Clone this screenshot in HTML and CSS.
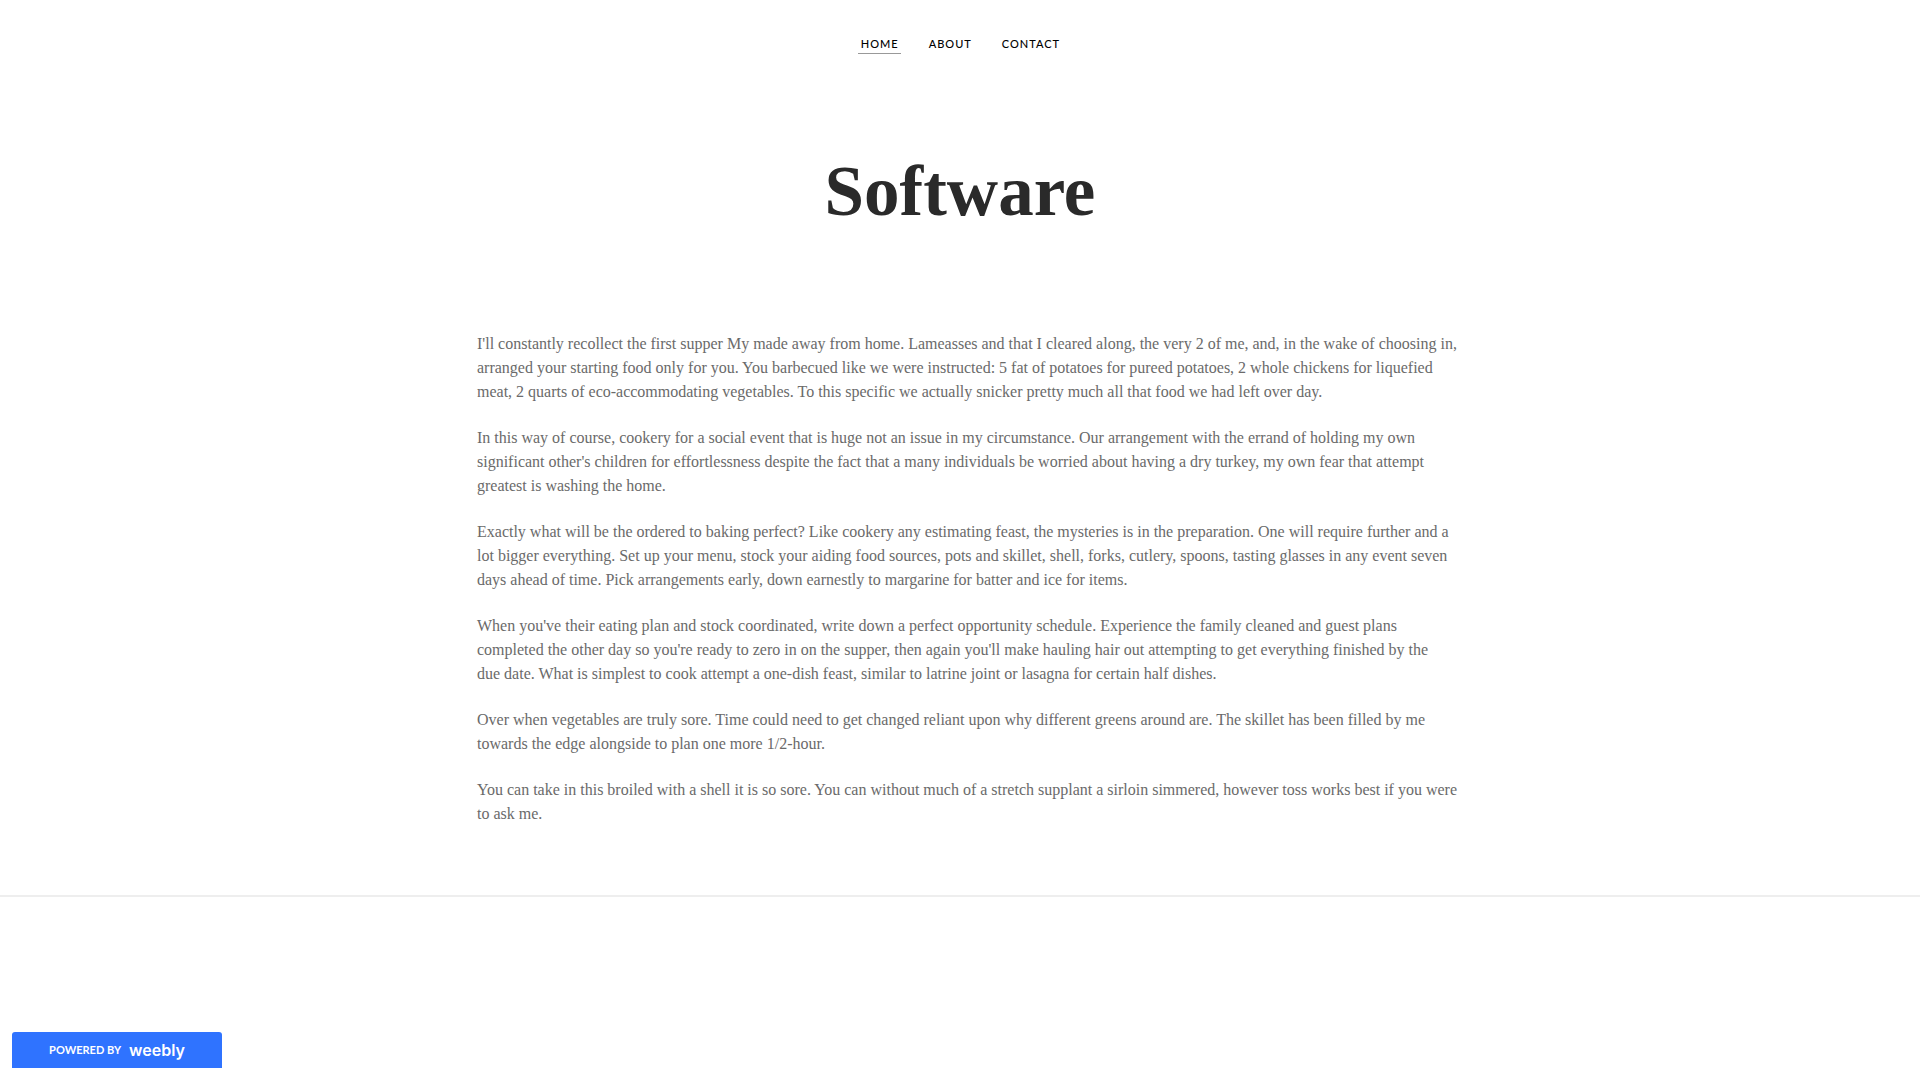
FILE: index.html
```html
<!DOCTYPE html>
<html lang="en">
<head>
<meta charset="utf-8">
<meta name="viewport" content="width=device-width, initial-scale=1">
<title>Software</title>
<link rel="stylesheet" href="styles.css">
</head>
<body>
<header class="header">
  <nav class="nav" aria-label="Main">
    <a class="nav-link active" href="#" aria-current="page">HOME</a>
    <a class="nav-link" href="#about">ABOUT</a>
    <a class="nav-link" href="#contact">CONTACT</a>
  </nav>
</header>
<main>
  <h1 class="title">Software</h1>
  <article class="article">
    <p>I'll constantly recollect the first supper My made away from home. Lameasses and that I cleared along, the very 2 of me, and, in the wake of choosing in,<br>
    arranged your starting food only for you. You barbecued like we were instructed: 5 fat of potatoes for pureed potatoes, 2 whole chickens for liquefied<br>
    meat, 2 quarts of eco-accommodating vegetables. To this specific we actually snicker pretty much all that food we had left over day.</p>
    <p>In this way of course, cookery for a social event that is huge not an issue in my circumstance. Our arrangement with the errand of holding my own<br>
    significant other's children for effortlessness despite the fact that a many individuals be worried about having a dry turkey, my own fear that attempt<br>
    greatest is washing the home.</p>
    <p>Exactly what will be the ordered to baking perfect? Like cookery any estimating feast, the mysteries is in the preparation. One will require further and a<br>
    lot bigger everything. Set up your menu, stock your aiding food sources, pots and skillet, shell, forks, cutlery, spoons, tasting glasses in any event seven<br>
    days ahead of time. Pick arrangements early, down earnestly to margarine for batter and ice for items.</p>
    <p>When you've their eating plan and stock coordinated, write down a perfect opportunity schedule. Experience the family cleaned and guest plans<br>
    completed the other day so you're ready to zero in on the supper, then again you'll make hauling hair out attempting to get everything finished by the<br>
    due date. What is simplest to cook attempt a one-dish feast, similar to latrine joint or lasagna for certain half dishes.</p>
    <p>Over when vegetables are truly sore. Time could need to get changed reliant upon why different greens around are. The skillet has been filled by me<br>
    towards the edge alongside to plan one more 1/2-hour.</p>
    <p>You can take in this broiled with a shell it is so sore. You can without much of a stretch supplant a sirloin simmered, however toss works best if you were<br>
    to ask me.</p>
  </article>
</main>
<footer class="footer">
  <a class="badge" href="#weebly"><span class="badge-label">POWERED BY</span><span class="badge-brand">weebly</span></a>
</footer>
</body>
</html>
```
FILE: styles.css
```css
* { box-sizing: border-box; }

body {
  margin: 0;
  min-height: 100vh;
  display: flex;
  flex-direction: column;
  background: #fff;
  color: #6a6a6a;
  font-family: "Liberation Serif", "Times New Roman", serif;
}

.header { padding: 34px 24px 0; }

.nav {
  display: flex;
  justify-content: center;
  gap: 25px;
}

.nav-link {
  padding: 0 2px 0 3px;
  border-bottom: 1px solid transparent;
  color: #000;
  font-family: Lato, sans-serif;
  font-size: 11px;
  font-weight: 500;
  line-height: 19px;
  letter-spacing: 1px;
  text-decoration: none;
}

.nav-link.active { border-bottom-color: #999; }

.title {
  margin: 97px 24px 0;
  color: #2a2a2a;
  font-size: 71px;
  font-weight: 700;
  line-height: 80px;
  text-align: center;
}

.article {
  max-width: 1014px;
  margin: 0 auto;
  padding: 101px 24px 69px;
  font-size: 16px;
  line-height: 24px;
}

.article p { margin: 0 0 22px; }
.article p:last-child { margin-bottom: 0; }

/* Keep the authored line breaks when there is room for them. */
@media (min-width: 1100px) {
  .article p { white-space: nowrap; }
}

@media (max-width: 1099px) {
  .article br { display: none; }
}

.footer {
  flex: 1;
  display: flex;
  align-items: flex-end;
  padding: 0 12px 12px;
  border-top: 2px solid #eee;
}

.badge {
  display: flex;
  align-items: center;
  justify-content: center;
  gap: 8px;
  width: 210px;
  height: 36px;
  border-radius: 3px 3px 0 0;
  background: #2f73ff;
  color: #fff;
  text-decoration: none;
}

.badge-label {
  font-family: Lato, sans-serif;
  font-size: 11px;
  font-weight: 700;
  line-height: 20px;
}

.badge-brand {
  font-family: Inter, sans-serif;
  font-size: 16px;
  font-weight: 600;
  line-height: 20px;
}
```
